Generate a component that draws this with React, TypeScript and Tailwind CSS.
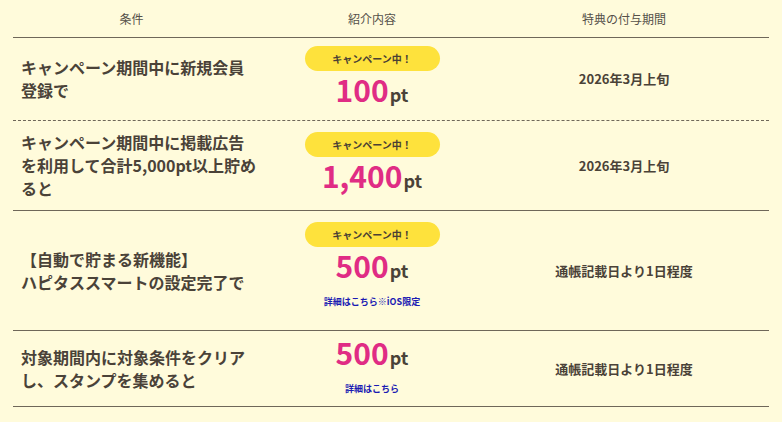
import React from "react";

type Row = {
  condition: string[];
  campaign: boolean;
  amount: string;
  link?: string;
  period: string;
  rowClass: string;
  midClass: string;
};

const rows: Row[] = [
  {
    condition: ["キャンペーン期間中に新規会員登録で"],
    campaign: true,
    amount: "100",
    period: "2026年3月上旬",
    rowClass: "h-[83px] border-dashed",
    midClass: "justify-center",
  },
  {
    condition: ["キャンペーン期間中に掲載広告を利用して合計5,000pt以上貯めると"],
    campaign: true,
    amount: "1,400",
    period: "2026年3月上旬",
    rowClass: "h-[90px] border-solid",
    midClass: "justify-center",
  },
  {
    condition: ["【自動で貯まる新機能】", "ハピタススマートの設定完了で"],
    campaign: true,
    amount: "500",
    link: "詳細はこちら※iOS限定",
    period: "通帳記載日より1日程度",
    rowClass: "h-[120px] border-solid",
    midClass: "justify-start pt-[11px]",
  },
  {
    condition: ["対象期間内に対象条件をクリアし、スタンプを集めると"],
    campaign: false,
    amount: "500",
    link: "詳細はこちら",
    period: "通帳記載日より1日程度",
    rowClass: "h-[76px] border-solid",
    midClass: "justify-start pt-[3px]",
  },
];

export default function App() {
  return (
    <div
      className="min-h-screen w-full bg-[#fffbdb] px-[13px] text-[#4a4238]"
      style={{ fontFamily: '"Noto Sans CJK JP", "Noto Sans", sans-serif' }}
    >
      {/* header */}
      <div className="grid h-[38px] grid-cols-[247px_224px_1fr] items-center border-b border-[#6f6759] text-center text-[12px] text-[#555049]">
        <div className="pr-[10px]">条件</div>
        <div>紹介内容</div>
        <div className="pr-[5px]">特典の付与期間</div>
      </div>

      {rows.map((r, i) => (
        <div
          key={i}
          className={`grid grid-cols-[247px_224px_1fr] border-b border-[#6f6759] ${r.rowClass}`}
        >
          <div className="flex flex-col justify-center pl-2 text-[16px] font-bold leading-[23px]">
            {r.condition.map((line, j) => (
              <div key={j}>{line}</div>
            ))}
          </div>

          <div className={`flex flex-col items-center ${r.midClass}`}>
            {r.campaign && (
              <div className="flex h-[25px] w-[135px] items-center justify-center rounded-full bg-[#fee23c] text-[10px] font-bold text-[#4a4034]">
                キャンペーン中！
              </div>
            )}
            <div className="leading-[36px] font-bold">
              <span className="text-[30px] text-[#e02c84]">{r.amount}</span>
              <span className="ml-[1px] text-[18px] text-[#4a4238]">pt</span>
            </div>
            {r.link && (
              <a className="mt-[5px] text-[9px] font-bold leading-[16px] text-[#1b1bb3]">
                {r.link}
              </a>
            )}
          </div>

          <div className="flex items-center justify-center pr-[5px] text-[13px] font-bold">
            {r.period}
          </div>
        </div>
      ))}
    </div>
  );
}
